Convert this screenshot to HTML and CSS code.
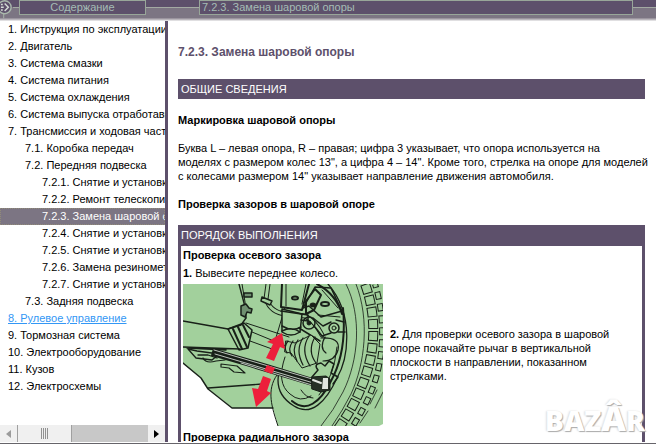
FILE: index.html
```html
<!DOCTYPE html>
<html lang="ru">
<head>
<meta charset="utf-8">
<title>7.2.3. Замена шаровой опоры</title>
<link rel="stylesheet" href="styles.css">
</head>
<body>
<header class="topbar">
  <button class="toggle" type="button" aria-label="Скрыть содержание">
    <svg width="14" height="20" viewBox="0 0 14 20">
      <circle cx="5" cy="7" r="7" fill="#5d506b" stroke="#a9b8ac" stroke-width="1.5"/>
      <path d="M4 14v5" stroke="#a9b8ac"/>
      <path d="M1 4h2M1 7h3M1 10h2" stroke="#d5ddd7" stroke-width="1.5"/>
      <path d="M5 3l4 4-4 4" fill="none" stroke="#d5ddd7" stroke-width="1.5"/>
    </svg>
  </button>
  <span class="wire wire-short"></span>
  <div class="box box-contents">Содержание</div>
  <span class="wire wire-mid"></span>
  <div class="box box-title">7.2.3. Замена шаровой опоры</div>
  <span class="wire wire-end"></span>
</header>
<div class="panes">
  <nav class="sidebar">
    <ul class="tree">
      <li><a href="#">1. Инструкция по эксплуатации</a></li>
      <li><a href="#">2. Двигатель</a></li>
      <li><a href="#">3. Система смазки</a></li>
      <li><a href="#">4. Система питания</a></li>
      <li><a href="#">5. Система охлаждения</a></li>
      <li><a href="#">6. Система выпуска отработавших газов</a></li>
      <li><a href="#">7. Трансмиссия и ходовая часть</a></li>
      <li><a class="level2" href="#">7.1. Коробка передач</a></li>
      <li><a class="level2" href="#">7.2. Передняя подвеска</a></li>
      <li><a class="level3" href="#">7.2.1. Снятие и установка</a></li>
      <li><a class="level3" href="#">7.2.2. Ремонт телескопической</a></li>
      <li><a class="level3 selected" href="#">7.2.3. Замена шаровой опоры</a></li>
      <li><a class="level3" href="#">7.2.4. Снятие и установка</a></li>
      <li><a class="level3" href="#">7.2.5. Снятие и установка</a></li>
      <li><a class="level3" href="#">7.2.6. Замена резинометаллических</a></li>
      <li><a class="level3" href="#">7.2.7. Снятие и установка</a></li>
      <li><a class="level2" href="#">7.3. Задняя подвеска</a></li>
      <li><a class="hot" href="#">8. Рулевое управление</a></li>
      <li><a href="#">9. Тормозная система</a></li>
      <li><a href="#">10. Электрооборудование</a></li>
      <li><a href="#">11. Кузов</a></li>
      <li><a href="#">12. Электросхемы</a></li>
    </ul>
    <div class="scrollbar">
      <button class="sb-button" type="button" aria-label="Влево"><svg width="5" height="8" viewBox="0 0 5 8"><path d="M5 0v8L0 4z" fill="#9b9b9b"/></svg></button>
      <div class="sb-thumb"><svg width="8" height="11" viewBox="0 0 8 11"><path d="M.5 0v11M2.500 0v11M4.500 0v11M6.500 0v11" stroke="#929292"/></svg></div>
      <div class="sb-track"></div>
      <button class="sb-button" type="button" aria-label="Вправо"><svg width="5" height="8" viewBox="0 0 5 8"><path d="M0 0v8l5-4z" fill="#000"/></svg></button>
    </div>
  </nav>
  <main class="content">
    <h1>7.2.3. Замена шаровой опоры</h1>
    <h2 class="band">ОБЩИЕ СВЕДЕНИЯ</h2>
    <h3>Маркировка шаровой опоры</h3>
    <p class="intro">Буква L – левая опора, R – правая; цифра 3 указывает, что опора используется на<br>моделях с размером колес 13", а цифра 4 – 14". Кроме того, стрелка на опоре для моделей<br>с колесами размером 14" указывает направление движения автомобиля.</p>
    <h3>Проверка зазоров в шаровой опоре</h3>
    <section class="steps">
      <h2 class="band">ПОРЯДОК ВЫПОЛНЕНИЯ</h2>
      <div class="steps-body">
        <h4>Проверка осевого зазора</h4>
        <p class="step"><b>1.</b> Вывесите переднее колесо.</p>
        <div class="figure-row">
          <svg class="figure" width="200" height="142" viewBox="0 0 200 142" fill="none" stroke="#182018" stroke-linecap="round" stroke-linejoin="round">
            <path d="M0 0H200V140L196 142H95L90 124H49L41 117 25 105 18 94 0 79Z" fill="#a2d09c" stroke="none"/>
            <!-- tyre tread -->
            <g stroke-linecap="butt">
              <path d="M182 0C195 35 192 72 178 104Q170 124 155 145" stroke-width="10" stroke-dasharray="10 2"/>
              <path d="M182 0C195 35 192 72 178 104Q170 124 155 145" stroke="#a2d09c" stroke-width="8" stroke-dasharray="8 4" stroke-dashoffset="-1"/>
              <path d="M192 0C203 35 201 78 188 108Q181 125 168 145" stroke-width="6" stroke-dasharray="8 4" stroke-dashoffset="4"/>
              <path d="M192 0C203 35 201 78 188 108Q181 125 168 145" stroke="#a2d09c" stroke-width="4" stroke-dasharray="6 6" stroke-dashoffset="3"/>
            </g>
            <path d="M163 0C179 32 176 76 160 108Q151 126 138 142M173 0C187 36 182 80 168 110Q160 126 149 142" stroke-width=".8"/>
            <path d="M194 106l-7 14M200 108l-8 16M185 127l-8 12" stroke-width=".8"/>
            <!-- wheel rim -->
            <path d="M145 0C172 31 165 75 154 94 143 118 128 133 111 122Q91 110 96 88" stroke-width="1.300"/>
            <path d="M134 0Q153 10 159 30M160 24C163 56 158 79 148 97 137 119 123 129 109 117" stroke-width="2"/>
            <path d="M154 63Q151 93 136 111M94 91C83 106 89 124 95 142M102 73Q93 99 107 110 117 119 128 112M118 106q5 8 12 8" stroke-width="1"/>
            <path d="M120 24L132 3 148 4 159 27 138 33 126 22Z" stroke-width="1.500"/>
            <path d="M123 17L132 5 138 11 131 26 123 30Z" stroke-width="2"/>
            <ellipse cx="130" cy="21" rx="3" ry="2" fill="#182018"/><ellipse cx="142" cy="20" rx="4" ry="2" stroke-width="2"/>
            <path d="M135 31L157 33M139 6l16 18" stroke-width="1"/>
            <!-- body panel -->
            <path d="M0 37L45 45 58 41 63 34 61 19 56 0M0 63L57 65M4 64l39 2M25 104l54-4M0 79L18 94 25 105 49 124H90" stroke-width="1.400"/>
            <path d="M59 0l3 18 1 16M103 20L92 57M63 39L106 53M69 48L103 62M67 57l22 8" stroke-width="1"/>
            <path d="M61 9h8v4h-8zM58 22l5-2 3 4 3 1-1 4-4-1-2 5-4-2z" fill="#6f9070" stroke-width="1.500"/>
            <path d="M45 45L61 39 69 46 65 64 56 66Z" stroke-width="1.500"/>
            <path d="M50 45l9 20M55 43l9 20M60 41l6 12" stroke-width="2"/>
            <!-- brake hose -->
            <path d="M85 0L83 15Q88 29 103 30L122 32Q132 37 139 51" stroke-width="5"/>
            <path d="M85 0L83 15Q88 29 103 30L122 32Q132 37 139 51" stroke="#a2d09c" stroke-width="3"/>
            <path d="M79 13l10 4-2 4-9-4z" fill="#a2d09c" stroke-width="1.500"/>
            <!-- strut -->
            <path d="M99 0L98 23 119 26 126 0" fill="#a2d09c" stroke-width="2"/>
            <path d="M103 0v22M123 0l-4 20" stroke-width="1"/>
            <ellipse cx="112" cy="14" rx="3" ry="1.500" stroke-width="2"/>
            <path d="M99 25L119 30 117 48Q108 54 99 48Z" fill="#a2d09c" stroke-width="1.500"/>
            <path d="M99 42q10 6 19 1M99 47q10-5 18 1M98 27l27 4v6l-7-1" stroke-width="1.500"/>
            <circle cx="126" cy="39" r="6" stroke-width="1.500"/><circle cx="126" cy="39" r="2" fill="#182018"/>
            <path d="M130 34l10 8 8-4M132 43l7 9 9-3M116 44l21 13" stroke-width="1.500"/>
            <circle cx="151" cy="44" r="5" stroke-width="1.500"/><circle cx="151" cy="44" r="2"/>
            <path d="M153 36l8 2M155 48h7" stroke-width="1.500"/>
            <!-- drive shaft boot -->
            <path d="M103 57L112 59 128 51 137 60 134 79 119 84 108 69 102 68Z" fill="#a2d09c"/>
            <path d="M105 57q-5 6-1 12M110 57q-6 8-1 15M115 56q-7 9-1 21M120 54q-8 12 0 27M126 52q-9 14 1 30M132 53q-8 14 1 26" stroke-width="1.200"/>
            <path d="M138 54q20-1 17 12-3 11-15 11M142 53q-6 11 1 16" stroke-width="1.200"/>
            <!-- control arm -->
            <path d="M5 65l8 9 16 2 7-6-22-3zM15 71h10l9 3" stroke-width="1.300"/>
            <path d="M38 80l16 2 8 7-11-1-5-4-8-1zM20 74q3 6 13 3l9-1" stroke-width="1.200"/>
            <path d="M29 68L67 79 136 100" stroke-width="8" stroke-linecap="butt"/>
            <path d="M31 66L136 97M32 70L134 100M58 79L132 102" stroke="#bac2ba" stroke-width="1"/>
            <!-- ball joint -->
            <path d="M129 93l6-7q-5-6 3-7l4 3 4-5 5 3-3 9 7 4-5 7" stroke-width="1.500"/>
            <path d="M129 93l14-1 4 3v11l-9 2-9-3z" fill="#263026"/>
            <path d="M140 94h5v11h-6z" fill="#e0e5df" stroke="none"/><path d="M130 96l8 3" stroke="#e0e5df" stroke-width="2"/>
            <!-- direction arrows -->
            <g fill="#ed1f3b" stroke="none">
              <path d="M99 49L102 65 97 63 91 77 83 74 90 60 84 58Z"/>
              <path d="M84 81l8 3-3 6-8-3z"/>
              <path d="M80 92l8 3-4 12 4 2-15 14-4-19 6 1z"/>
            </g>
          </svg>
          <p class="step"><b>2.</b> Для проверки осевого зазора в шаровой опоре покачайте рычаг в вертикальной плоскости в направлении, показанном стрелками.</p>
        </div>
        <h4>Проверка радиального зазора</h4>
      </div>
    </section>
  </main>
</div>
<div class="watermark">BAZ<span class="tall">Â</span>R</div>
</body>
</html>
```

FILE: styles.css
```css
* { box-sizing: border-box; }

body {
  display: flex;
  flex-direction: column;
  height: 100vh;
  margin: 0;
  overflow: hidden;
  border-bottom: 1px solid #66646a;
  background: #fff;
  color: #000;
  font: 11px/14px "Liberation Sans", Arial, sans-serif;
}

h1, h2, h3, h4, p, ul {
  margin: 0;
  padding: 0;
  font-size: inherit;
}

button { padding: 0; border: 0; background: none; }

.topbar {
  display: flex;
  flex: none;
  height: 21px;
  background: linear-gradient(#5d506b 7px, #7c7583 7px, #7c7583 18px, #9b959f 18px, #9b959f 19px, #b9b5bb 19px, #b9b5bb 20px, #e0dfe1 20px);
}

.toggle { display: flex; flex: none; width: 13px; }

.wire {
  flex: none;
  height: 1px;
  margin-top: 7px;
  background: #a3aaa3;
}

.wire-short { width: 6px; }
.wire-mid { width: 53px; }
.wire-end { width: 23px; }

.box {
  height: 15px;
  border: 1px solid #98a699;
  background: #5d506b;
  color: #a5bcb5;
  line-height: 13px;
  white-space: nowrap;
}

.box-contents { flex: none; width: 127px; text-align: center; }
.box-title { flex: 1; padding-left: 2px; }

.panes { display: flex; flex: 1; min-height: 0; margin-bottom: 1px; }

.sidebar {
  display: flex;
  flex: none;
  flex-direction: column;
  width: 168px;
  border-right: 3px solid #5d506b;
}

.tree {
  flex: 1;
  overflow: hidden;
  list-style: none;
  line-height: 17px;
  white-space: nowrap;
}

.tree a {
  display: block;
  padding-left: 8px;
  overflow: hidden;
  color: inherit;
  text-decoration: none;
}

.tree .level2 { padding-left: 25px; }
.tree .level3 { padding-left: 42px; }
.tree .selected { background: #7c7583; color: #fff; outline: 1px dotted #918b78; outline-offset: -1px; }
.tree .hot { color: #3397f5; text-decoration: underline; }

.scrollbar { display: flex; flex: none; height: 17px; background: #c8c8c8; }

.sb-button, .sb-thumb {
  display: flex;
  align-items: center;
  justify-content: center;
  background: #f0f0f0;
}

.sb-button { width: 17px; }
.sb-thumb { width: 55px; border: 1px solid #a0a0a0; border-width: 0 1px; }
.sb-track { flex: 1; }

.content {
  flex: 1;
  min-width: 0;
  padding: 24px 11px 0 10px;
  overflow: hidden;
}

.content h1 { margin-bottom: 20px; color: #5d506b; font-size: 12px; }
.content h3 { margin: 14px 0; }
.intro { white-space: nowrap; }

.band {
  padding: 0 3px;
  background: #5d506b;
  color: #fff;
  font-weight: normal;
  line-height: 20px;
}

.steps { border: 3px solid #5d506b; border-top: 0; }
.steps .band { padding: 0; line-height: 21px; }
.steps-body { padding: 2px; }
.steps-body > .step { margin: 4px 0; }
.figure-row { display: flex; align-items: center; gap: 7px; margin-bottom: 4px; }
.figure { flex: none; }

.watermark {
  position: absolute;
  right: 11px;
  bottom: 8px;
  color: #fff;
  font: 900 28px/32px "Open Sans", sans-serif;
  text-shadow: 1px 1px 1px #aaa, -1px 0 2px #ddd;
}

.watermark .tall { font-size: 34px; }
```
